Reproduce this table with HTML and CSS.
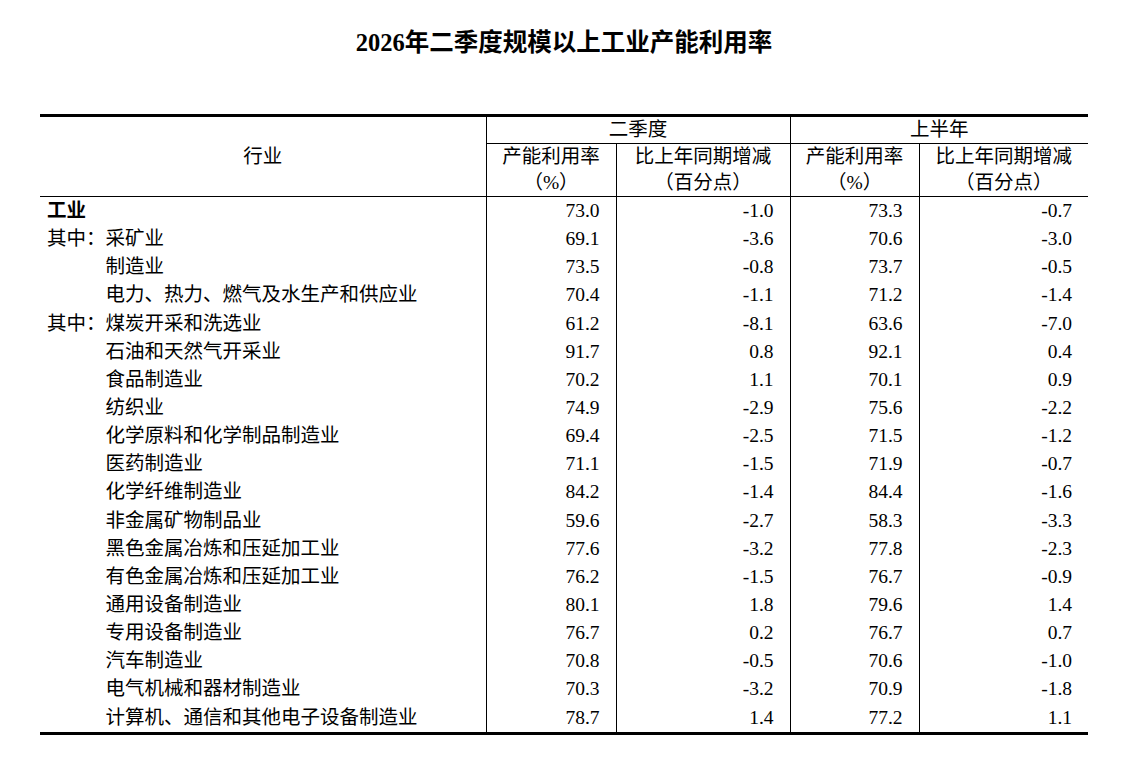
FILE: index.html
```html
<!DOCTYPE html>
<html lang="zh-CN">
<head>
<meta charset="utf-8">
<title>2026年二季度规模以上工业产能利用率</title>
<link rel="stylesheet" href="styles.css">
</head>
<body>
<div class="page">
  <h1 class="title">2026年二季度规模以上工业产能利用率</h1>
  <table class="data">
    <colgroup>
      <col class="c-name">
      <col class="c-q1">
      <col class="c-q2">
      <col class="c-h1">
      <col class="c-h2">
    </colgroup>
    <thead>
      <tr class="hr1">
        <th rowspan="2" class="h-name">行业</th>
        <th colspan="2" class="h-group">二季度</th>
        <th colspan="2" class="h-group">上半年</th>
      </tr>
      <tr class="hr2">
        <th class="h-sub">产能利用率<br>（%）</th>
        <th class="h-sub">比上年同期增减<br>（百分点）</th>
        <th class="h-sub">产能利用率<br>（%）</th>
        <th class="h-sub">比上年同期增减<br>（百分点）</th>
      </tr>
    </thead>
    <tbody>
      <tr><td class="name bold">工业</td><td>73.0</td><td>-1.0</td><td>73.3</td><td>-0.7</td></tr>
      <tr><td class="name">其中：采矿业</td><td>69.1</td><td>-3.6</td><td>70.6</td><td>-3.0</td></tr>
      <tr><td class="name indent">制造业</td><td>73.5</td><td>-0.8</td><td>73.7</td><td>-0.5</td></tr>
      <tr><td class="name indent">电力、热力、燃气及水生产和供应业</td><td>70.4</td><td>-1.1</td><td>71.2</td><td>-1.4</td></tr>
      <tr><td class="name">其中：煤炭开采和洗选业</td><td>61.2</td><td>-8.1</td><td>63.6</td><td>-7.0</td></tr>
      <tr><td class="name indent">石油和天然气开采业</td><td>91.7</td><td>0.8</td><td>92.1</td><td>0.4</td></tr>
      <tr><td class="name indent">食品制造业</td><td>70.2</td><td>1.1</td><td>70.1</td><td>0.9</td></tr>
      <tr><td class="name indent">纺织业</td><td>74.9</td><td>-2.9</td><td>75.6</td><td>-2.2</td></tr>
      <tr><td class="name indent">化学原料和化学制品制造业</td><td>69.4</td><td>-2.5</td><td>71.5</td><td>-1.2</td></tr>
      <tr><td class="name indent">医药制造业</td><td>71.1</td><td>-1.5</td><td>71.9</td><td>-0.7</td></tr>
      <tr><td class="name indent">化学纤维制造业</td><td>84.2</td><td>-1.4</td><td>84.4</td><td>-1.6</td></tr>
      <tr><td class="name indent">非金属矿物制品业</td><td>59.6</td><td>-2.7</td><td>58.3</td><td>-3.3</td></tr>
      <tr><td class="name indent">黑色金属冶炼和压延加工业</td><td>77.6</td><td>-3.2</td><td>77.8</td><td>-2.3</td></tr>
      <tr><td class="name indent">有色金属冶炼和压延加工业</td><td>76.2</td><td>-1.5</td><td>76.7</td><td>-0.9</td></tr>
      <tr><td class="name indent">通用设备制造业</td><td>80.1</td><td>1.8</td><td>79.6</td><td>1.4</td></tr>
      <tr><td class="name indent">专用设备制造业</td><td>76.7</td><td>0.2</td><td>76.7</td><td>0.7</td></tr>
      <tr><td class="name indent">汽车制造业</td><td>70.8</td><td>-0.5</td><td>70.6</td><td>-1.0</td></tr>
      <tr><td class="name indent">电气机械和器材制造业</td><td>70.3</td><td>-3.2</td><td>70.9</td><td>-1.8</td></tr>
      <tr><td class="name indent">计算机、通信和其他电子设备制造业</td><td>78.7</td><td>1.4</td><td>77.2</td><td>1.1</td></tr>
    </tbody>
  </table>
</div>
</body>
</html>
```

FILE: styles.css
```css
html, body {
  margin: 0;
  padding: 0;
  background: #ffffff;
}

body {
  font-family: "Liberation Serif", "Noto Sans CJK SC", serif;
  color: #000000;
}

.page {
  width: 1048px;
  margin-left: 40px;
  padding-top: 28px;
}

.title {
  margin: 0;
  font-size: 24.5px;
  line-height: 30px;
  font-weight: bold;
  text-align: center;
}

.data {
  margin-top: 56px;
  width: 1048px;
  border-collapse: collapse;
  table-layout: fixed;
  border-top: 3px solid #000;
  border-bottom: 3px solid #000;
  font-size: 19.5px;
}

.c-name { width: 446px; }
.c-q1 { width: 130px; }
.c-q2 { width: 174px; }
.c-h1 { width: 129px; }
.c-h2 { width: 169px; }

.data th {
  font-weight: normal;
  text-align: center;
  vertical-align: middle;
  padding: 0;
  line-height: 26px;
  border-left: 1px solid #000;
  border-bottom: 1px solid #000;
}

.data th.h-name {
  border-left: none;
}

.hr1 { height: 26px; }
.hr2 { height: 50px; }

.data td {
  padding: 0 16px 0 0;
  height: 28.15px;
  line-height: 24px;
  text-align: right;
  vertical-align: middle;
  border-left: 1px solid #000;
  white-space: nowrap;
}

.data td.name {
  border-left: none;
  text-align: left;
  padding: 0 0 0 7px;
}

.data td.indent {
  padding-left: calc(7px + 3em);
}

.data td.bold {
  font-weight: bold;
}
```
